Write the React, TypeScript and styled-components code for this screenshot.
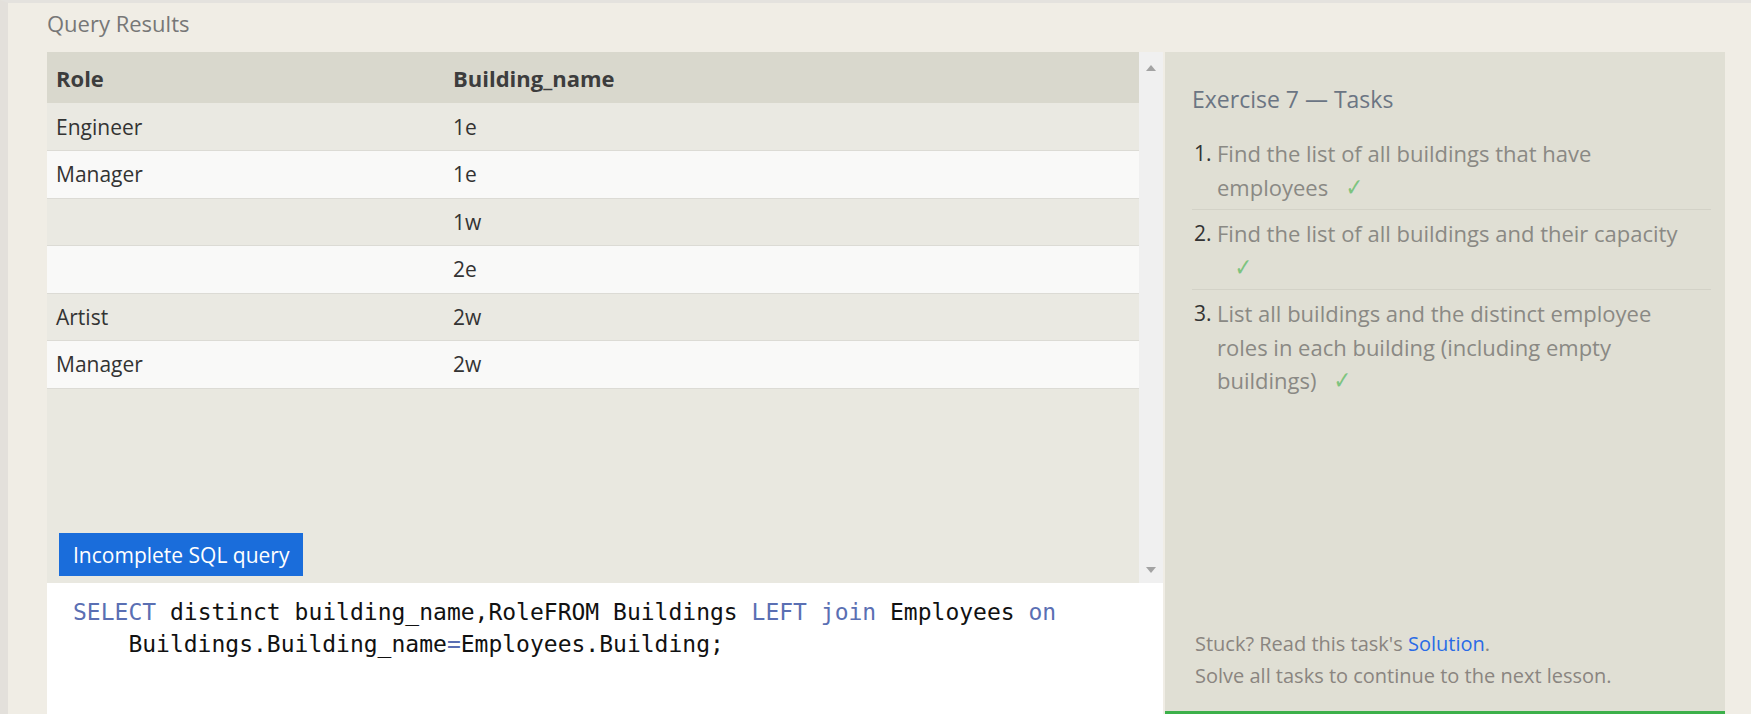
import React from 'react';
import styled, { createGlobalStyle } from 'styled-components';

const GlobalStyle = createGlobalStyle`
  html, body {
    margin: 0;
    padding: 0;
    background: #f0ede5;
    font-family: "Open Sans", "Noto Sans", sans-serif;
    overflow: hidden;
  }
  * { box-sizing: border-box; }
`;

const Page = styled.div`
  height: 714px;
  border-left: 8px solid #e3e0db;
  border-top: 3px solid #e4e2de;
  padding: 0 26px 0 39px;
  display: flex;
  flex-direction: column;
`;

const Heading = styled.div`
  font-size: 22px;
  line-height: 40px;
  color: #777;
  margin-bottom: 9px;
`;

const Main = styled.div`
  flex: 1;
  display: flex;
  gap: 2px;
  min-height: 0;
`;

const LeftCol = styled.div`
  width: 1116px;
  display: flex;
  flex-direction: column;
`;

const Results = styled.div`
  position: relative;
  height: 531px;
  display: flex;
  background: #e9e8e0;
`;

const TableWrap = styled.div`
  flex: 1;
`;

const Table = styled.table`
  width: 100%;
  border-collapse: collapse;
  font-size: 21px;
  color: #333;
`;

const HeadCell = styled.th<{ $w?: number }>`
  text-align: left;
  font-weight: 700;
  font-size: 22px;
  color: #3d3d3d;
  background: #d9d8cd;
  height: 51px;
  padding: 0 9px;
  width: ${p => (p.$w ? `${p.$w}px` : 'auto')};
`;

const Row = styled.tr<{ $alt: boolean }>`
  background: ${p => (p.$alt ? '#f9f9f8' : '#eae9e2')};
  border-bottom: 1px solid #dcdbd5;
`;

const Cell = styled.td`
  height: 47.5px;
  padding: 0 9px;
`;

const Scrollbar = styled.div`
  width: 24px;
  background: #f0f0f0;
  display: flex;
  flex-direction: column;
  justify-content: space-between;
  align-items: center;
  padding: 13px 0 10px;
`;

const Arrow = styled.div<{ $down?: boolean }>`
  width: 0;
  height: 0;
  border-left: 5px solid transparent;
  border-right: 5px solid transparent;
  ${p =>
    p.$down
      ? 'border-top: 6px solid #a3a3a3;'
      : 'border-bottom: 6px solid #a3a3a3;'}
`;

const StatusButton = styled.div`
  position: absolute;
  left: 12px;
  bottom: 7px;
  height: 43px;
  padding: 0 14px;
  display: flex;
  align-items: center;
  background: #1a6ddb;
  color: #fff;
  font-size: 21px;
`;

const Editor = styled.div`
  flex: 1;
  background: #fff;
  padding: 13px 26px;
  font-family: "DejaVu Sans Mono", "Liberation Mono", monospace;
  font-size: 23px;
  line-height: 32px;
  color: #111;
`;

const CodeLine = styled.div<{ $wrapped?: boolean }>`
  white-space: pre;
  padding-left: ${p => (p.$wrapped ? '4ch' : '0')};
`;

const Kw = styled.span`
  color: #5a6fb3;
`;

const Panel = styled.div`
  width: 560px;
  background: #e0dfd4;
  border-bottom: 3px solid #3cb04a;
  display: flex;
  flex-direction: column;
  justify-content: space-between;
  padding: 32px 14px 19px 27px;
`;

const PanelTitle = styled.div`
  font-size: 23px;
  line-height: 30px;
  color: #6b7583;
`;

const TaskList = styled.ol`
  list-style: none;
  margin: 16px 0 0;
  padding: 0;
`;

const Task = styled.li`
  display: flex;
  align-items: flex-start;
  padding: 7px 0 5px;
  border-bottom: 1px solid #d3d2c7;
  font-size: 22px;
  line-height: 33.5px;
  &:last-child {
    border-bottom: none;
  }
`;

const Num = styled.span`
  width: 25px;
  flex: none;
  color: #333;
  padding-left: 2px;
  font-size: 21px;
`;

const TaskText = styled.span`
  flex: 1;
  color: #8a8984;
  padding-right: 12px;
`;

const Check = styled.span`
  display: inline-block;
  margin-left: 16px;
  color: #7dc47f;
  font-family: "DejaVu Sans", sans-serif;
  font-size: 25px;
  line-height: 1;
  transform: scaleX(0.85);
`;

const Footer = styled.div`
  font-size: 20px;
  line-height: 32px;
  color: #8a8580;
  padding-left: 3px;
`;

const Link = styled.a`
  color: #2a6be6;
  text-decoration: none;
`;

const rows: [string, string][] = [
  ['Engineer', '1e'],
  ['Manager', '1e'],
  ['', '1w'],
  ['', '2e'],
  ['Artist', '2w'],
  ['Manager', '2w'],
];

const tasks = [
  'Find the list of all buildings that have employees',
  'Find the list of all buildings and their capacity',
  'List all buildings and the distinct employee roles in each building (including empty buildings)',
];

const App: React.FC = () => {
  return (
    <>
      <GlobalStyle />
      <Page>
        <Heading>Query Results</Heading>
        <Main>
          <LeftCol>
            <Results>
              <TableWrap>
                <Table>
                  <thead>
                    <tr>
                      <HeadCell $w={397}>Role</HeadCell>
                      <HeadCell>Building_name</HeadCell>
                    </tr>
                  </thead>
                  <tbody>
                    {rows.map(([role, building], i) => (
                      <Row key={i} $alt={i % 2 === 1}>
                        <Cell>{role}</Cell>
                        <Cell>{building}</Cell>
                      </Row>
                    ))}
                  </tbody>
                </Table>
              </TableWrap>
              <Scrollbar>
                <Arrow />
                <Arrow $down />
              </Scrollbar>
              <StatusButton>Incomplete SQL query</StatusButton>
            </Results>
            <Editor>
              <CodeLine>
                <Kw>SELECT</Kw> distinct building_name,RoleFROM Buildings <Kw>LEFT</Kw> <Kw>join</Kw> Employees <Kw>on</Kw>
              </CodeLine>
              <CodeLine $wrapped>
                Buildings.Building_name<Kw>=</Kw>Employees.Building;
              </CodeLine>
            </Editor>
          </LeftCol>
          <Panel>
            <div>
              <PanelTitle>Exercise 7 — Tasks</PanelTitle>
              <TaskList>
                {tasks.map((t, i) => (
                  <Task key={i}>
                    <Num>{i + 1}.</Num>
                    <TaskText>
                      {t}
                      <Check>✓</Check>
                    </TaskText>
                  </Task>
                ))}
              </TaskList>
            </div>
            <Footer>
              Stuck? Read this task's <Link href="#">Solution</Link>.
              <br />
              Solve all tasks to continue to the next lesson.
            </Footer>
          </Panel>
        </Main>
      </Page>
    </>
  );
};

export default App;
